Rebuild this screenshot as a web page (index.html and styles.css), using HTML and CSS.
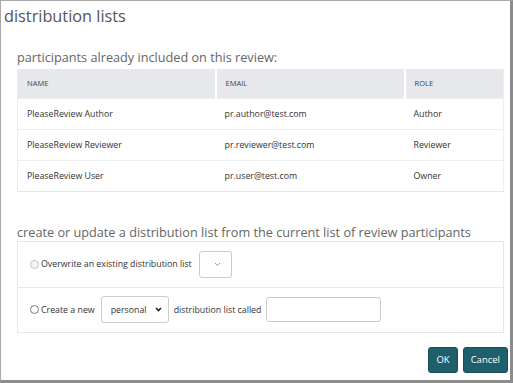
FILE: index.html
```html
<!DOCTYPE html>
<html lang="en">
<head>
    <meta charset="UTF-8">
    <title>distribution lists</title>
    <link rel="stylesheet" href="styles.css">
</head>
<body>
    <div class="dialog">
        <h1>distribution lists</h1>

        <h2>participants already included on this review:</h2>
        <table class="participants">
            <tr>
                <th class="col-name">NAME</th>
                <th class="col-email">EMAIL</th>
                <th>ROLE</th>
            </tr>
            <tr>
                <td>PleaseReview Author</td>
                <td>pr.author@test.com</td>
                <td>Author</td>
            </tr>
            <tr>
                <td>PleaseReview Reviewer</td>
                <td>pr.reviewer@test.com</td>
                <td>Reviewer</td>
            </tr>
            <tr>
                <td>PleaseReview User</td>
                <td>pr.user@test.com</td>
                <td>Owner</td>
            </tr>
        </table>

        <h2 class="second">create or update a distribution list from the current list of review participants</h2>
        <div class="options">
            <div class="option">
                <span class="radio disabled"></span>
                <span class="label">Overwrite an existing distribution list</span>
                <div class="select small">
                    <span></span>
                    <svg class="caret" width="7" height="5" viewBox="0 0 7 5"><path d="M1 1 L3.5 3.5 L6 1" fill="none" stroke="#999" stroke-width="1"/></svg>
                </div>
            </div>
            <div class="option">
                <span class="radio"></span>
                <span class="label">Create a new</span>
                <div class="select wide">
                    <span>personal</span>
                    <svg class="caret" width="7" height="5" viewBox="0 0 7 5"><path d="M1 1 L3.5 3.5 L6 1" fill="none" stroke="#222" stroke-width="1.6"/></svg>
                </div>
                <span class="label">distribution list called</span>
                <div class="textbox"></div>
            </div>
        </div>

        <div class="buttons">
            <button class="btn">OK</button>
            <button class="btn">Cancel</button>
        </div>
    </div>
</body>
</html>
```

FILE: styles.css
```css
* {
    box-sizing: border-box;
    margin: 0;
    padding: 0;
}
html, body {
    width: 513px;
    height: 383px;
    overflow: hidden;
}
body {
    font-family: "Open Sans", "Liberation Sans", sans-serif;
    color: #333;
    background: #fff;
}
.dialog {
    width: 513px;
    height: 383px;
    border-top: 1px solid #a8a8a8;
    border-left: 1px solid #a8a8a8;
    border-right: 3px solid #8c8c8c;
    border-bottom: 3px solid #8c8c8c;
    padding: 0 7px 0 16px;
    display: flex;
    flex-direction: column;
}
h1 {
    font-size: 16.3px;
    font-weight: 400;
    color: #555;
    margin: 3px 0 0 -13px;
    line-height: 24px;
}
h2 {
    font-size: 12.7px;
    font-weight: 400;
    color: #666;
    line-height: 18px;
    margin-top: 20px;
    margin-bottom: 3px;
}
h2.second {
    margin-top: 31px;
    margin-bottom: 0;
}
.participants {
    width: 487px;
    border-collapse: collapse;
    font-size: 8.8px;
    border-bottom: 1px solid #e6e6e6;
    border-left: 1px solid #eee;
    border-right: 1px solid #eee;
}
th {
    background: #e6e8eb;
    font-weight: 400;
    font-size: 7.5px;
    text-align: left;
    height: 29px;
    padding: 0 9px;
    color: #444;
}
th.col-name, th.col-email {
    border-right: 2px solid #fff;
}
.col-name { width: 198px; }
.col-email { width: 189px; }
td {
    height: 31px;
    padding: 0 9px;
    border-top: 1px solid #eee;
    color: #333;
}
.options {
    width: 487px;
    border: 1px solid #e8e8e8;
}
.option {
    display: flex;
    align-items: center;
    gap: 5px;
    height: 45px;
    padding-left: 12px;
    font-size: 8.8px;
}
.option + .option {
    border-top: 1px solid #e8e8e8;
}
.radio {
    width: 9px;
    height: 9px;
    border: 1px solid #777;
    border-radius: 50%;
    margin-right: -3px;
}
.radio.disabled {
    border-color: #c4c4c4;
    background: #f4f4f4;
}
.label {
    color: #333;
}
.select {
    height: 27px;
    border: 1px solid #ccc;
    border-radius: 3px;
    display: flex;
    align-items: center;
    justify-content: space-between;
    color: #333;
}
.select.small {
    width: 33px;
    padding: 0 10px 0 4px;
    margin-left: 2px;
}
.select.wide {
    width: 68px;
    padding: 0 6px 0 9px;
    margin-left: 1px;
}
.textbox {
    width: 115px;
    height: 25px;
    border: 1px solid #ccc;
    border-radius: 3px;
}
.buttons {
    display: flex;
    justify-content: flex-end;
    gap: 5px;
    margin-top: 14px;
    margin-right: -5px;
}
.btn {
    height: 26px;
    padding: 0 7px;
    background: #1f5f6b;
    color: #fff;
    border: 1px solid #174d57;
    border-radius: 3px;
    font-family: "Open Sans", "Liberation Sans", sans-serif;
    font-size: 9.5px;
}
```
